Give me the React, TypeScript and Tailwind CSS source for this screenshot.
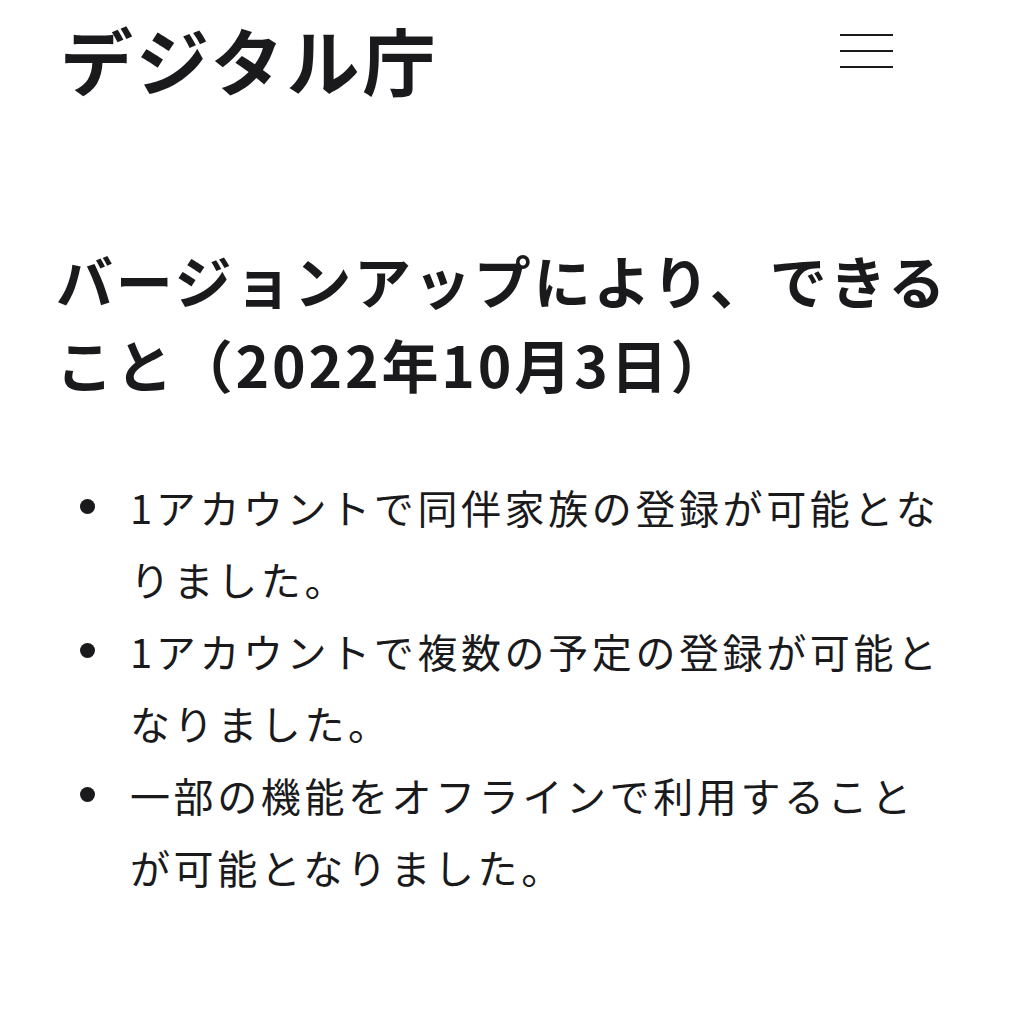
import React from 'react';

const items = [
  '1アカウントで同伴家族の登録が可能となりました。',
  '1アカウントで複数の予定の登録が可能となりました。',
  '一部の機能をオフラインで利用することが可能となりました。',
];

export default function App() {
  return (
    <div
      className="min-h-[1009px] bg-white text-[#1a1a1c]"
      style={{ fontFamily: '"Noto Sans CJK JP", "Noto Sans", sans-serif' }}
    >
      <header className="flex items-start justify-between pl-[60px] pr-[131px] pt-[22px]">
        <div className="text-[73px] font-bold leading-none tracking-[3px]">デジタル庁</div>
        <button className="mt-[12px] flex w-[53px] flex-col gap-[14px]" aria-label="メニュー">
          <span className="block h-[2px] w-full bg-[#1a1a1c]" />
          <span className="block h-[2px] w-full bg-[#1a1a1c]" />
          <span className="block h-[2px] w-full bg-[#1a1a1c]" />
        </button>
      </header>

      <main className="pl-[56px] pr-[50px] pt-[142px]">
        <h1 className="text-[57px] font-bold leading-[84px] tracking-[0.05em]">
          バージョンアップにより、できること（2022年10月3日）
        </h1>

        <ul className="mt-[66px] list-none pl-[74px] pr-[20px]">
          {items.map((t) => (
            <li key={t} className="relative text-[40px] leading-[72px] tracking-[0.09em]">
              <span className="absolute left-[-50px] top-[28px] h-[15px] w-[15px] rounded-full bg-[#1a1a1c]" />
              {t}
            </li>
          ))}
        </ul>
      </main>
    </div>
  );
}
